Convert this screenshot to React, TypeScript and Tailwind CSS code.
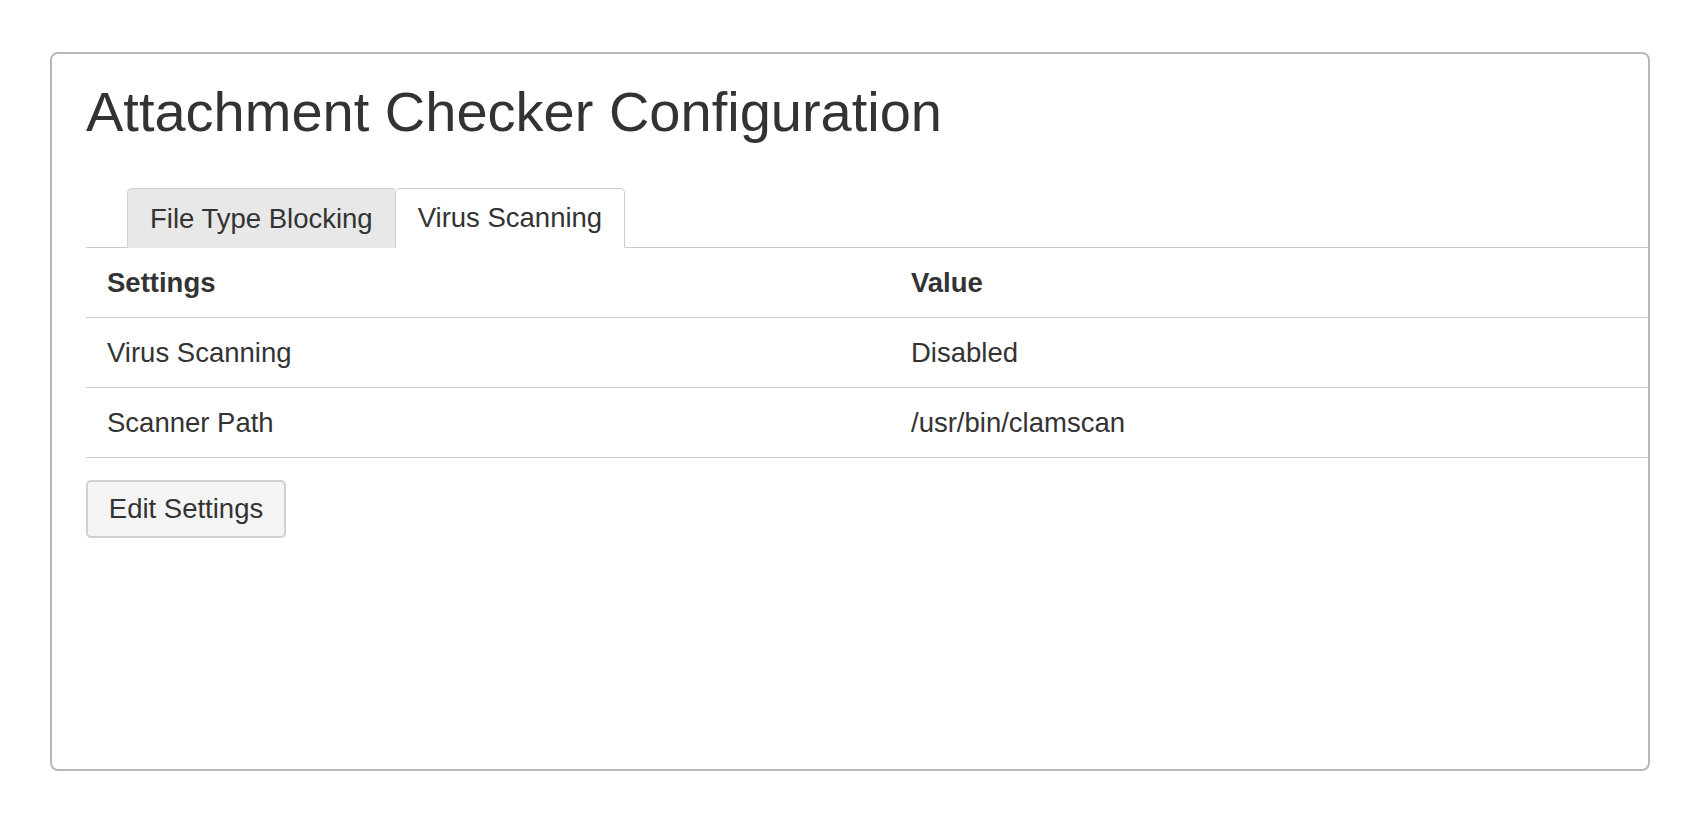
const ROWS = [
  { setting: 'Virus Scanning', value: 'Disabled' },
  { setting: 'Scanner Path', value: '/usr/bin/clamscan' },
];

export default function App() {
  return (
    <div className="min-h-screen bg-white pl-[50px] pt-[52px] font-['Liberation_Sans',Arial,sans-serif] text-[#333333]">
      <div className="h-[719px] w-[1600px] rounded-[8px] border-2 border-[#b8b8b8] bg-white pl-[34px] pt-[30px]">
        <h1 className="text-[56px] leading-none font-normal">Attachment Checker Configuration</h1>

        <div className="mt-[48px] flex border-b border-[#cccccc] pl-[41px]">
          <div className="-mb-px flex h-[60px] items-center rounded-tl-[5px] border-t border-l border-[#d2d2d2] bg-[#e8e8e8] px-[22px] text-[27.5px]">
            File Type Blocking
          </div>
          <div className="-mb-px flex h-[60px] items-center rounded-t-[5px] border border-[#cccccc] border-b-white bg-white px-[22px] text-[27.5px]">
            Virus Scanning
          </div>
        </div>

        <div className="text-[27.5px]">
          <div className="grid h-[70px] grid-cols-[804px_1fr] items-center border-b border-[#cccccc] font-bold">
            <div className="px-[21px]">Settings</div>
            <div className="px-[21px]">Value</div>
          </div>
          {ROWS.map((row) => (
            <div
              key={row.setting}
              className="grid h-[70px] grid-cols-[804px_1fr] items-center border-b border-[#cccccc]"
            >
              <div className="px-[21px]">{row.setting}</div>
              <div className="px-[21px]">{row.value}</div>
            </div>
          ))}
        </div>

        <button
          type="button"
          className="mt-[22px] flex h-[58px] w-[200px] items-center justify-center rounded-[5px] border-2 border-[#d0d0d0] bg-[#f4f4f4] text-[27.5px] text-[#333333]"
        >
          Edit Settings
        </button>
      </div>
    </div>
  );
}
